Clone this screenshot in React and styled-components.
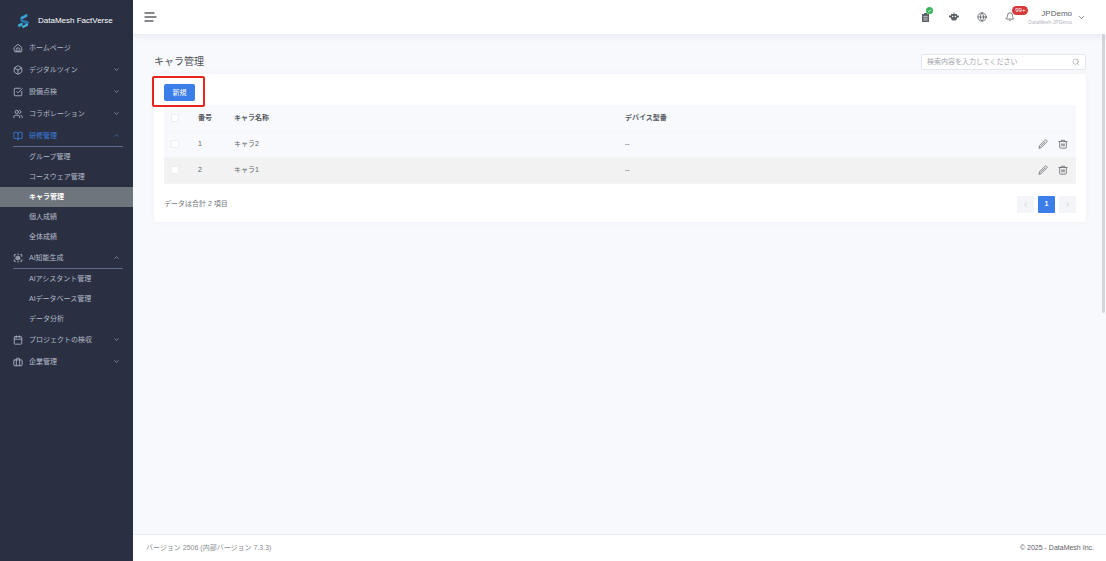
import React from "react";
import styled, { createGlobalStyle } from "styled-components";
import {
  Box, SquareCheckBig, Users, BookOpen, Calendar,
  ChevronDown, ChevronUp, ChevronLeft, ChevronRight, Globe, Bell, Search,
} from "lucide-react";

const Global = createGlobalStyle`
  *, *::before, *::after { box-sizing: border-box; }
  body {
    margin: 0;
    font-family: "Liberation Sans", "Noto Sans CJK JP", sans-serif;
    font-size: 7px;
    line-height: 12px;
    color: #606266;
    background: #f8f9fd;
  }
  button, input { font: inherit; color: inherit; }
  button { padding: 0; border: 0; background: none; cursor: pointer; }
  a { color: inherit; text-decoration: none; }
  svg { display: block; flex: none; }
`;

const Shell = styled.div`
  display: grid;
  grid-template-columns: 133px minmax(0, 1fr);
  height: 100vh;
`;

const Sidebar = styled.aside`
  background: #2a3042;
  color: #b4bac8;
  overflow: hidden;
`;

const Brand = styled.a`
  display: flex;
  align-items: center;
  gap: 8px;
  height: 37px;
  padding: 4px 0 0 17px;
  font-size: 8px;
  color: #fff;
`;

const MenuButton = styled.button`
  display: flex;
  align-items: center;
  gap: 6px;
  width: 110px;
  height: 22px;
  margin-left: 13px;
  padding-right: 3px;
  text-align: left;
  color: ${(p) => (p.$active ? "#3b7ddd" : "inherit")};
  border-bottom: 1px solid ${(p) => (p.$open ? "#5b6d8c" : "transparent")};
`;

const MenuLabel = styled.span`
  flex: 1;
  white-space: nowrap;
`;

const SubLink = styled.a`
  display: flex;
  align-items: center;
  height: 20px;
  padding-left: 29px;
  white-space: nowrap;
  color: ${(p) => (p.$active ? "#fff" : "inherit")};
  font-weight: ${(p) => (p.$active ? 700 : 400)};
  background: ${(p) => (p.$active ? "#6f757d" : "transparent")};
`;

const Main = styled.div`
  display: grid;
  grid-template-rows: 34px minmax(0, 1fr) 27px;
  min-width: 0;
`;

const TopBar = styled.header`
  display: flex;
  align-items: center;
  justify-content: space-between;
  padding: 0 20px 0 11px;
  background: #fff;
  box-shadow: 0 1px 8px rgba(40, 50, 80, 0.1);
  z-index: 1;
`;

const Tools = styled.div`
  display: flex;
  align-items: center;
  gap: 18px;
`;

const Tool = styled.button`
  position: relative;
  display: flex;
  color: #5d6268;
`;

const Badge = styled.span`
  position: absolute;
  left: 7px;
  top: -6px;
  width: 16px;
  height: 9px;
  border-radius: 5px;
  background: #d63a3a;
  color: #fff;
  font-size: 6px;
  line-height: 9px;
  text-align: center;
`;

const OkBadge = styled.span`
  position: absolute;
  left: 5px;
  top: -5px;
`;

const Account = styled.button`
  display: flex;
  align-items: center;
  gap: 5px;
  margin-left: -5px;
  text-align: right;
`;

const AccountName = styled.span`
  display: block;
  font-size: 8px;
  line-height: 10px;
`;

const AccountOrg = styled.span`
  display: block;
  font-size: 5px;
  line-height: 7px;
  color: #b4b7bd;
`;

const Content = styled.main`
  padding: 19px 20px 0 21px;
  overflow: auto;
  scrollbar-width: none;
  display: flex;
  flex-direction: column;
`;

const Body = styled.div`
  position: relative;
  display: grid;
  min-height: 0;
`;

const ScrollThumb = styled.span`
  position: absolute;
  right: 1px;
  top: 0;
  width: 3px;
  height: 279px;
  border-radius: 2px;
  background: #d3d5db;
`;

const TitleRow = styled.div`
  display: flex;
  align-items: center;
  justify-content: space-between;
  height: 18px;
  margin-bottom: 3px;
`;

const Title = styled.h1`
  margin: 0;
  font-size: 10px;
  font-weight: 400;
  color: #4d5157;
`;

const SearchBox = styled.label`
  display: flex;
  align-items: center;
  width: 165px;
  height: 16px;
  padding: 0 5px;
  border: 1px solid #e4e7ed;
  border-radius: 2px;
  background: #fff;
  color: #a0a4ab;
`;

const SearchInput = styled.input`
  flex: 1;
  min-width: 0;
  padding: 0;
  border: 0;
  outline: 0;
  background: none;
  &::placeholder { color: #a0a4ab; opacity: 1; }
`;

const Card = styled.section`
  padding: 10px 10px 9px;
  background: #fff;
  border-radius: 2px;
  box-shadow: 0 0 6px rgba(40, 50, 80, 0.04);
`;

const Actions = styled.div`
  position: relative;
  display: flex;
  height: 21px;
`;

const Primary = styled.button`
  width: 31px;
  height: 17px;
  border-radius: 2px;
  background: #3b7de9;
  color: #fff;
`;

const Highlight = styled.span`
  position: absolute;
  left: -12px;
  top: -8px;
  width: 53px;
  height: 31px;
  border: 2px solid #e8251d;
  border-radius: 2px;
  pointer-events: none;
`;

const Table = styled.table`
  width: 100%;
  table-layout: fixed;
  border-collapse: collapse;
`;

const Row = styled.tr`
  height: 26px;
  background: ${(p) => (p.$hover ? "#f2f2f2" : "#f8f9fd")};
  border-bottom: 1px solid #f3f5f9;
`;

const Head = styled.th`
  width: ${(p) => p.$width || "auto"};
  padding: 0;
  text-align: left;
  color: #55595f;
`;

const Cell = styled.td`
  padding: 0;
`;

const Check = styled.input`
  appearance: none;
  display: block;
  width: 8px;
  height: 8px;
  margin: 0 0 0 7px;
  border: 1px solid #eceef2;
  border-radius: 1px;
  background: #fff;
`;

const RowActions = styled.div`
  display: flex;
  justify-content: flex-end;
  gap: 10px;
  padding-right: 8px;
`;

const IconButton = styled.button`
  display: flex;
  color: #6a6e74;
`;

const CardFooter = styled.div`
  display: flex;
  align-items: center;
  justify-content: space-between;
  margin-top: 12px;
  color: #74777d;
`;

const Pager = styled.nav`
  display: flex;
  gap: 4px;
`;

const PageButton = styled.button`
  display: flex;
  align-items: center;
  justify-content: center;
  width: 17px;
  height: 17px;
  border-radius: 1px;
  font-weight: 700;
  color: ${(p) => (p.$current ? "#fff" : "#b4b8c0")};
  background: ${(p) => (p.$current ? "#3b7de9" : "#f4f5f8")};
`;

const Footer = styled.footer`
  display: flex;
  align-items: center;
  justify-content: space-between;
  padding: 0 12px 0 13px;
  border-top: 1px solid #eceef2;
  background: #fff;
  color: #8a8d92;
`;

const Copyright = styled.span`
  color: #5d6066;
`;

const Logo = () => (
  <svg width="13" height="16" viewBox="0 0 13 16" aria-hidden="true">
    <path d="M3.2 5.2 4 3.8 9.6 1l.9.5-.2 2.3-5.6 2.8z" fill="#3aa0d0" />
    <path d="M3.2 5.2 5 6.2l6.4 2.2.6.8-.8 2-1 .2-6-2.4-1-1.4z" fill="#2776ad" />
    <path d="M1 11.6 4.6 9.8l1.2.8-.2 1.8-3.4 1.7L1 13.2z" fill="#35a9d0" />
    <path d="m5.2 13 5-2.4 1 .6-.4 1.6-4.6 2.2-1-.6z" fill="#43b6db" />
  </svg>
);

const LineIcon = ({ size = 10, children }) => (
  <svg width={size} height={size} viewBox="0 0 24 24" fill="none" stroke="currentColor" strokeWidth="2" strokeLinecap="round" strokeLinejoin="round" aria-hidden="true">
    {children}
  </svg>
);

const HomeIcon = () => (
  <LineIcon>
    <path d="M3 10.5 12 3l9 7.5V19a2 2 0 0 1-2 2H5a2 2 0 0 1-2-2z" />
    <path d="M7.5 21v-5a4.5 4.5 0 0 1 9 0v5M12 16.5V21" />
  </LineIcon>
);

const AiIcon = () => (
  <LineIcon>
    <path d="M3 8V4h3M18 4h3v4M21 16v4h-3M6 20H3v-4M12 2v3M12 19v3" />
    <path d="M8 9h8v6H8zM12 9v6M8 12h8" />
  </LineIcon>
);

const CompanyIcon = () => (
  <LineIcon>
    <rect x="2" y="7" width="20" height="14" rx="2" />
    <path d="M8 21V5a2 2 0 0 1 2-2h4a2 2 0 0 1 2 2v16" />
  </LineIcon>
);

const PencilIcon = () => (
  <LineIcon>
    <path d="m2.5 21.5 1.4-5.6L17 2.8a2.2 2.2 0 0 1 3.1 0l1.1 1.1a2.2 2.2 0 0 1 0 3.1L8.100 20.100z" />
    <path d="m6.500 17.500 10-10" strokeWidth="1.500" />
  </LineIcon>
);

const TrashIcon = () => (
  <LineIcon>
    <path d="M2 6h20M8 6V3h8v3M4 6v14a2 2 0 0 0 2 2h12a2 2 0 0 0 2-2V6" />
    <path d="M9 11v6M12 11v6M15 11v6M9 14h6" strokeWidth="1.500" />
  </LineIcon>
);

const MenuGlyph = () => (
  <svg width="13" height="10" viewBox="0 0 13 10" fill="none" stroke="#5d6066" strokeWidth="1.3" strokeLinecap="round" aria-hidden="true">
    <path d="M1 1h9M1 5h11M1 9h8" />
  </svg>
);

const Clipboard = () => (
  <svg width="10" height="10" viewBox="0 0 10 10" aria-hidden="true">
    <path d="M1 2h2V1h3v1h2v8H1z" fill="#5d6268" />
    <path d="M2.400 4.400h4.200M2.400 6.200h4.200M2.400 8h4.200" stroke="#fff" strokeWidth=".6" />
  </svg>
);

const Robot = () => (
  <svg width="10" height="10" viewBox="0 0 10 10" fill="#5d6268" aria-hidden="true">
    <path d="M4.5.5h1V2H8v1.500h2v2H8V7L6.500 8.500h-3L2 7V5.500H0v-2h2V2h2.500z" />
    <circle cx="3.700" cy="4.500" r=".7" fill="#fff" />
    <circle cx="6.300" cy="4.500" r=".7" fill="#fff" />
  </svg>
);

const sections = [
  { label: "ホームページ", icon: HomeIcon },
  { label: "デジタルツイン", icon: Box, items: [] },
  { label: "設備点検", icon: SquareCheckBig, items: [] },
  { label: "コラボレーション", icon: Users, items: [] },
  {
    label: "研修管理", icon: BookOpen, active: true, open: true,
    items: ["グループ管理", "コースウェア管理", "キャラ管理", "個人成績", "全体成績"],
  },
  {
    label: "AI知能生成", icon: AiIcon, open: true,
    items: ["AIアシスタント管理", "AIデータベース管理", "データ分析"],
  },
  { label: "プロジェクトの検収", icon: Calendar, items: [] },
  { label: "企業管理", icon: CompanyIcon, items: [] },
];

const rows = [
  { id: 1, name: "キャラ2", device: "--" },
  { id: 2, name: "キャラ1", device: "--", hover: true },
];

export default function App() {
  return (
    <>
      <Global />
      <Shell>
        <Sidebar>
          <Brand href="#"><Logo />DataMesh FactVerse</Brand>
          <nav>
            {sections.map(({ label, icon: Icon, items, open, active }) => (
              <div key={label}>
                <MenuButton $open={open} $active={active} aria-expanded={items ? !!open : undefined}>
                  <Icon size={10} />
                  <MenuLabel>{label}</MenuLabel>
                  {items && (open ? <ChevronUp size={7} /> : <ChevronDown size={7} />)}
                </MenuButton>
                {open && items.map((item) => (
                  <SubLink key={item} href="#" $active={item === "キャラ管理"}>{item}</SubLink>
                ))}
              </div>
            ))}
          </nav>
        </Sidebar>
        <Main>
          <TopBar>
            <Tool aria-label="メニュー"><MenuGlyph /></Tool>
            <Tools>
              <Tool aria-label="タスク">
                <Clipboard />
                <OkBadge>
                  <svg width="7" height="7" viewBox="0 0 7 7" aria-hidden="true">
                    <circle cx="3.5" cy="3.5" r="3.5" fill="#35b558" />
                    <path d="m1.9 3.6 1.2 1.2 2-2.3" fill="none" stroke="#fff" strokeWidth=".8" />
                  </svg>
                </OkBadge>
              </Tool>
              <Tool aria-label="アシスタント"><Robot /></Tool>
              <Tool aria-label="言語"><Globe size={10} /></Tool>
              <Tool aria-label="通知"><Bell size={10} /><Badge>99+</Badge></Tool>
              <Account>
                <span>
                  <AccountName>JPDemo</AccountName>
                  <AccountOrg>DataMesh-JPDemo</AccountOrg>
                </span>
                <ChevronDown size={9} />
              </Account>
            </Tools>
          </TopBar>
          <Body>
            <Content>
              <TitleRow>
                <Title>キャラ管理</Title>
                <SearchBox>
                  <SearchInput aria-label="検索" placeholder="検索内容を入力してください" />
                  <Search size={8} />
                </SearchBox>
              </TitleRow>
              <Card>
                <Actions>
                  <Primary>新規</Primary>
                  <Highlight />
                </Actions>
                <Table>
                  <thead>
                    <Row>
                      <Head $width="34px"><Check type="checkbox" aria-label="すべて選択" /></Head>
                      <Head $width="36px">番号</Head>
                      <Head>キャラ名称</Head>
                      <Head>デバイス型番</Head>
                      <Head $width="60px" aria-label="操作" />
                    </Row>
                  </thead>
                  <tbody>
                    {rows.map((row) => (
                      <Row key={row.id} $hover={row.hover}>
                        <Cell><Check type="checkbox" aria-label={row.name} /></Cell>
                        <Cell>{row.id}</Cell>
                        <Cell>{row.name}</Cell>
                        <Cell>{row.device}</Cell>
                        <Cell>
                          <RowActions>
                            <IconButton aria-label="編集"><PencilIcon /></IconButton>
                            <IconButton aria-label="削除"><TrashIcon /></IconButton>
                          </RowActions>
                        </Cell>
                      </Row>
                    ))}
                  </tbody>
                </Table>
                <CardFooter>
                  <span>データは合計 2 項目</span>
                  <Pager aria-label="ページ">
                    <PageButton aria-label="前へ"><ChevronLeft size={7} /></PageButton>
                    <PageButton $current>1</PageButton>
                    <PageButton aria-label="次へ"><ChevronRight size={7} /></PageButton>
                  </Pager>
                </CardFooter>
              </Card>
            </Content>
            <ScrollThumb />
          </Body>
          <Footer>
            <span>バージョン 2506 (内部バージョン 7.3.3)</span>
            <Copyright>© 2025 - DataMesh Inc.</Copyright>
          </Footer>
        </Main>
      </Shell>
    </>
  );
}
